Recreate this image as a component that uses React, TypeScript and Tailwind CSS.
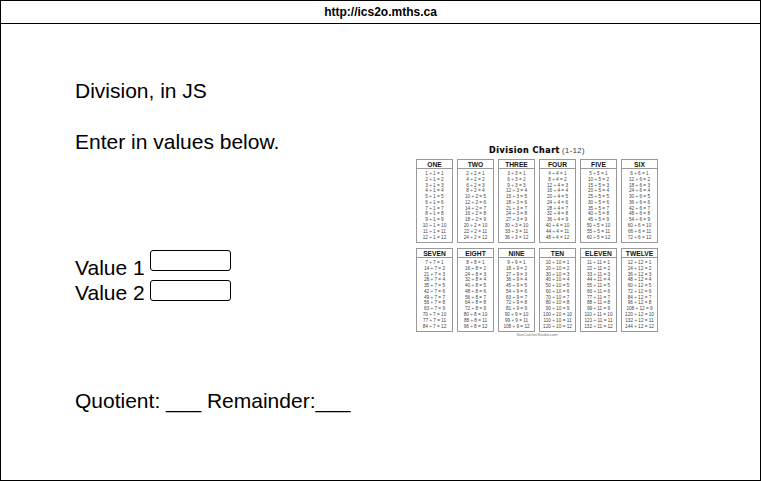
const NAMES = ["ONE", "TWO", "THREE", "FOUR", "FIVE", "SIX", "SEVEN", "EIGHT", "NINE", "TEN", "ELEVEN", "TWELVE"];
const ROWS = Array.from({ length: 12 }, (_, i) => i + 1);

function DivisionCard({ name, divisor }: { name: string; divisor: number }) {
  return (
    <div className="h-[84px] w-[37px] border border-[#999] text-center whitespace-nowrap">
      <div className="h-[9px] border-b border-[#999] pt-[1px] text-[6.7px] leading-[8px] font-bold text-[#111]">
        {name}
      </div>
      <div className="pt-[2px] text-[4.7px] leading-[5.78px] text-[#444]">
        {ROWS.map((n) => (
          <div key={n} className="flex justify-center">
            {divisor * n} ÷ {divisor} = {n}
          </div>
        ))}
      </div>
    </div>
  );
}

function DivisionChart() {
  return (
    <div className="w-[242px] pt-[120px]">
      <h2 className="mb-[1px] flex h-[14px] items-center justify-center gap-[2px] leading-none whitespace-nowrap">
        <span className="font-['DejaVu_Sans',sans-serif] text-[8px] font-bold tracking-[0.53px] text-black [-webkit-text-stroke:0.15px_black]">Division Chart</span>
        <span className="text-[7.5px] tracking-[0.5px] text-[#333]">(1-12)</span>
      </h2>
      <div className="grid grid-cols-6 gap-x-[4px] gap-y-[5px]">
        {NAMES.map((name, i) => (
          <DivisionCard key={name} name={name} divisor={i + 1} />
        ))}
      </div>
      <p className="text-center text-[4px] leading-[6px] text-[#777]">SunCatcherStudio.com</p>
    </div>
  );
}

export default function App() {
  return (
    <div className="flex h-[481px] w-[761px] flex-col border border-black bg-white font-['Liberation_Sans',Arial,sans-serif] text-black">
      <header className="flex h-[23px] shrink-0 items-center justify-center border-b border-black text-[12px] font-bold">
        http://ics2o.mths.ca
      </header>
      <main className="flex pl-[74px] text-[21px] leading-[25px]">
        <div className="w-[341px] shrink-0 pt-[54px] whitespace-nowrap">
          <h1>Division, in JS</h1>
          <p className="mt-[26px]">Enter in values below.</p>
          <div className="mt-[96px] flex gap-[5px]">
            <div className="w-[70px] pt-[5px]">
              <label htmlFor="v1" className="block">Value 1</label>
              <label htmlFor="v2" className="block">Value 2</label>
            </div>
            <div className="flex flex-col gap-[9px]">
              <input id="v1" className="block h-[21px] w-[81px] rounded-[3px] border border-black bg-white" />
              <input id="v2" className="block h-[21px] w-[81px] rounded-[3px] border border-black bg-white" />
            </div>
          </div>
          <p className="mt-[83px]">Quotient: ___ Remainder:___</p>
        </div>
        <DivisionChart />
      </main>
    </div>
  );
}
